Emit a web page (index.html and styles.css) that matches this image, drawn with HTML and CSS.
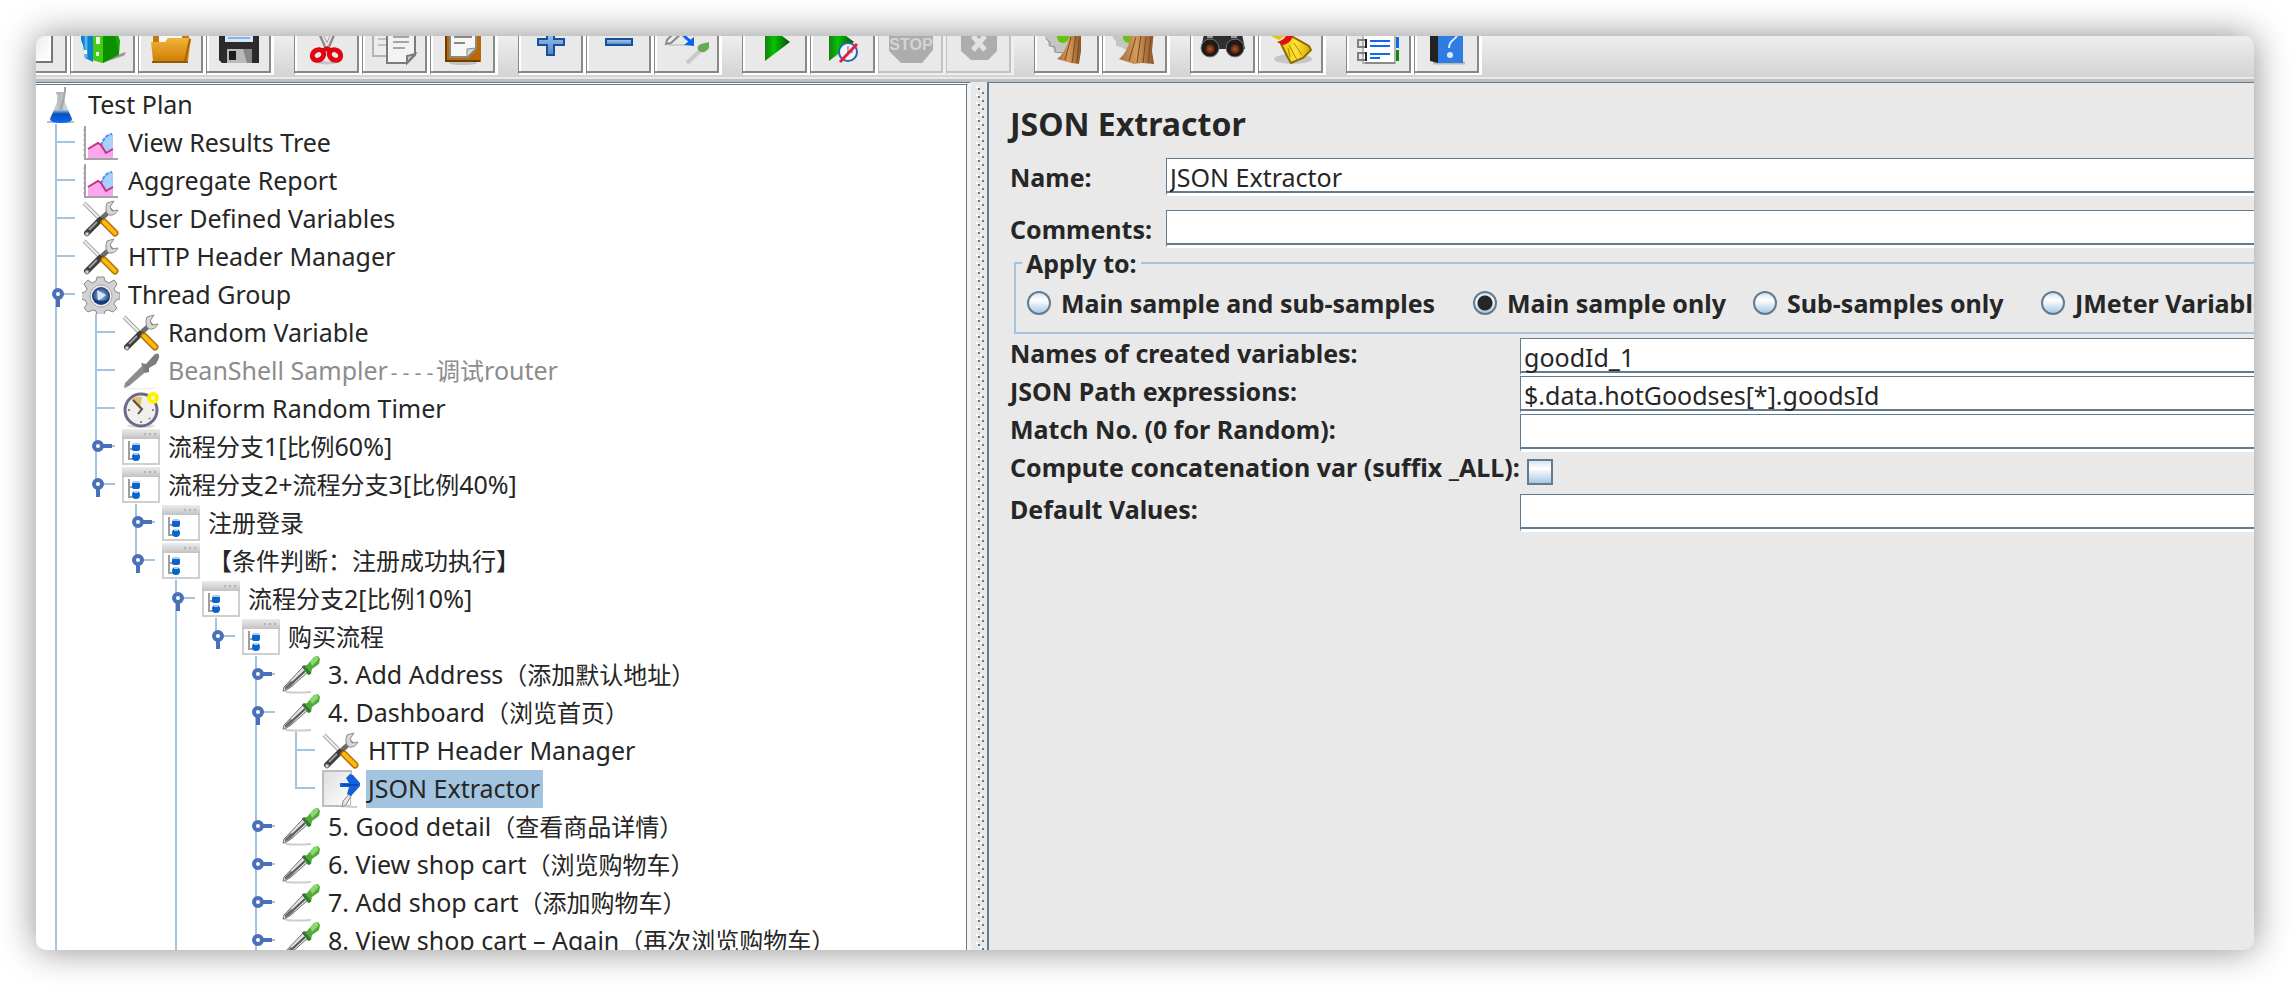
FILE: index.html
```
<!DOCTYPE html>
<html lang="zh-CN">
<head>
<meta charset="utf-8">
<title>JSON Extractor</title>
<link rel="stylesheet" href="styles.css">
</head>
<body>
<svg class="defs" width="0" height="0" aria-hidden="true">
  <defs>
    <linearGradient id="g-flask" x1="0" x2="1" y1="0" y2="0"><stop offset="0" stop-color="#eceef0"/><stop offset=".45" stop-color="#b4b8bc"/><stop offset="1" stop-color="#eef0f2"/></linearGradient>
    <linearGradient id="g-liquid" x1="0" x2="0" y1="0" y2="1"><stop offset="0" stop-color="#9cc0ea"/><stop offset=".3" stop-color="#0b4fb4"/><stop offset="1" stop-color="#0a6bff"/></linearGradient>
    <linearGradient id="g-bar" x1="0" x2="0" y1="0" y2="1"><stop offset="0" stop-color="#ececec"/><stop offset="1" stop-color="#c2c2c4"/></linearGradient>
    <linearGradient id="g-orange" x1="0" x2="0" y1="0" y2="1"><stop offset="0" stop-color="#f3b43a"/><stop offset="1" stop-color="#cc7a00"/></linearGradient>
    <linearGradient id="g-green" x1="0" x2="1" y1="0" y2="0"><stop offset="0" stop-color="#1a7a12"/><stop offset=".35" stop-color="#04c404"/><stop offset="1" stop-color="#044d08"/></linearGradient>
    <linearGradient id="g-blue" x1="0" x2="0" y1="0" y2="1"><stop offset="0" stop-color="#b4d2f0"/><stop offset="1" stop-color="#4c86c8"/></linearGradient>
    <linearGradient id="g-straw" x1="0" x2="1" y1="0" y2="0"><stop offset="0" stop-color="#a8703c"/><stop offset=".5" stop-color="#d49a5c"/><stop offset="1" stop-color="#8c5626"/></linearGradient>
    <linearGradient id="g-yellow" x1="0" x2="1" y1="0" y2="0"><stop offset="0" stop-color="#e8c400"/><stop offset=".5" stop-color="#ffe23a"/><stop offset="1" stop-color="#d8a800"/></linearGradient>
    <linearGradient id="g-paper" x1="0" x2="1" y1="0" y2="1"><stop offset="0" stop-color="#dedede"/><stop offset="1" stop-color="#ffffff"/></linearGradient>
    <radialGradient id="g-ball"><stop offset="0" stop-color="#c4d8f0"/><stop offset=".4" stop-color="#6f92c4"/><stop offset="1" stop-color="#163a78"/></radialGradient>
    <radialGradient id="g-lens"><stop offset="0" stop-color="#b45a24"/><stop offset=".6" stop-color="#6a2c10"/><stop offset="1" stop-color="#111"/></radialGradient>
    <pattern id="bumps" width="8" height="8" patternUnits="userSpaceOnUse">
      <path d="M0 0h2v2H0zM4 4h2v2H4z" fill="#fff"/>
      <path d="M2 2h2v2H2zM6 6h2v2H6z" fill="#637b8f"/>
    </pattern>

    <symbol id="i-flask" viewBox="0 0 38 38">
      <path d="M5 36h27" stroke="#b9bcc0" stroke-width="2"/>
      <path d="M15 7h8v9l7 16q0 4-4 4H12q-4 0-4-4l7-16z" fill="url(#g-flask)"/>
      <path d="M12 24h14l4 9q0 4-11 4T8 33z" fill="url(#g-liquid)"/>
      <path d="M23 1v5l-4 18" fill="none" stroke="#a2a5a9" stroke-width="2"/>
      <path d="M14 7h10" stroke="#b4b4c8" stroke-width="2"/>
    </symbol>
    <symbol id="i-chart" viewBox="0 0 38 38">
      <path d="M3 2v33h33" fill="none" stroke="#a6a3a6" stroke-width="2"/>
      <path d="M1 6h2M1 11h2M1 16h2M1 21h2M1 26h2M1 31h2" stroke="#a6a3a6"/>
      <path d="M19 22q3-11 12-12v22H22z" fill="#a9cffb"/>
      <path d="M19 22q3-11 11-12" fill="none" stroke="#4c93ee" stroke-width="2" stroke-dasharray="4 1"/>
      <path d="M6 25l10-7 9 12 6-4v8H6z" fill="#ff9cf0" opacity=".9"/>
      <path d="M6 25l10-6 3 2 5 8 7-4" fill="none" stroke="#cf2f78" stroke-width="2"/>
    </symbol>
    <symbol id="i-tools" viewBox="0 0 38 38">
      <path d="M2 3l17 17" stroke="#a6a6a6" stroke-width="4"/>
      <path d="M2 3l17 17" stroke="#f0f0f0" stroke-width="2"/>
      <path d="M20 18l10-9" stroke="#6c6c6c" stroke-width="5"/>
      <path d="M25 3q-3 8 2 12q6 1 9-5l-6 1-2-4 4-6z" fill="#d8d8d8" stroke="#8c8c8c"/>
      <path d="M18 20L5 33" stroke="#3c3c3c" stroke-width="6" stroke-linecap="round"/>
      <path d="M15 22L7 30" stroke="#9c9c9c" stroke-width="2"/>
      <circle cx="5" cy="34" r="2" fill="#d8d8d8" stroke="#777"/>
      <path d="M20 19l2 2" stroke="#222" stroke-width="4"/>
      <path d="M22 22l11 11" stroke="#b27400" stroke-width="7" stroke-linecap="round"/>
      <path d="M22 22l11 11" stroke="#fdb813" stroke-width="4" stroke-linecap="round"/>
    </symbol>
    <symbol id="i-gear" viewBox="0 0 38 38">
      <path d="M15 1h7l1 4 4 2 5-3 3 4-3 5 2 3 4 1v6l-4 1-2 4 3 4-4 4-5-2-3 1-1 4h-7l-1-4-3-1-5 2-4-4 3-4-2-4-4-1v-6l4-1 2-3-3-5 4-4 4 3 4-2z" fill="#d2d2d4" stroke="#8a8a8a"/>
      <circle cx="19" cy="20" r="11" fill="#f2f2f2" stroke="#a8a8a8"/>
      <circle cx="19" cy="20" r="9" fill="url(#g-ball)"/>
      <path d="M15 14l9 5-8 6z" fill="#dde8f6"/>
      <path d="M11 22a9 9 0 0 0 17 0q-8 6-17 0z" fill="#123c80"/>
    </symbol>
    <symbol id="i-dropper" viewBox="0 0 38 38">
      <path d="M4 36q12 1 25 0" fill="none" stroke="#cdcdcd" stroke-width="2"/>
      <path d="M21 11l5 5L9 31l-6 4H1l1-4z" fill="#e2e2e2" stroke="#707070" stroke-width="1"/>
      <path d="M23 15L8 29" stroke="#555" stroke-width="2"/>
      <path d="M9 25l-6 6v3l5-3 4-4z" fill="#6a6a6a"/>
      <path d="M20 10l5-1 7-8 4-1 2 3-1 5-7 5-1 5-3 1z" fill="#55a83c"/>
      <path d="M28 5l5-4q4-1 3 3l-6 6z" fill="#86dc6c"/>
      <path d="M21 10l7 8" stroke="#2f7a2c" stroke-width="3"/>
    </symbol>
    <symbol id="i-dropper-off" viewBox="0 0 38 38">
      <path d="M3 36q14 2 30 0" fill="none" stroke="#e6e6e6"/>
      <path d="M22 12L3 31l-1 5 5-2 20-17z" fill="#8c8c8c"/>
      <path d="M19 11l5 1 9-10q5-2 4 4l-3 6-7 4v4l-4 1z" fill="#7c7c7c"/>
    </symbol>
    <symbol id="i-timer" viewBox="0 0 38 38">
      <ellipse cx="19" cy="36" rx="14" ry="2" fill="#ddd"/>
      <circle cx="19" cy="20" r="16" fill="#f1f0ec" stroke="#6d678c" stroke-width="3"/>
      <path d="M9 9l9 11 2-13q-6-1-11 2z" fill="#e1c26c"/>
      <path d="M11 10l9 9-4 5" fill="none" stroke="#55504a" stroke-width="2"/>
      <path d="M19 31v2M30 20h2M6 20h2M27 28l1 1" stroke="#888" stroke-width="2"/>
      <circle cx="31" cy="8" r="6" fill="#fff200"/>
      <circle cx="31" cy="8" r="2" fill="#fffbb4"/>
    </symbol>
    <symbol id="i-window" viewBox="0 0 38 38">
      <rect x="1" y="2" width="36" height="34" fill="#fff" stroke="#cfcfcf" stroke-width="2"/>
      <rect x="0" y="1" width="38" height="10" fill="url(#g-bar)"/>
      <path d="M22 6h2M27 6h2M32 6h2" stroke="#b4b4b4" stroke-width="2"/>
      <path d="M7 13v18h5M7 21h5" fill="none" stroke="#9e9e9e" stroke-width="2"/>
      <rect x="10" y="16" width="8" height="7" rx="2" fill="#0d63cc"/>
      <circle cx="14" cy="29" r="4" fill="#0d63cc"/>
      <path d="M11 16h6M12 26h4" stroke="#a8cdf6" stroke-width="2"/>
    </symbol>
    <symbol id="i-extract" viewBox="0 0 38 38">
      <path d="M1 1h28v35H1z" fill="url(#g-paper)" stroke="#bdbdbd" stroke-width="2"/>
      <path d="M30 0h2v37h-3z" fill="#fff"/>
      <path d="M19 36q10 1 16 1" stroke="#cfcfcf" stroke-width="2" fill="none"/>
      <path d="M29 22l-8 9-1 6 4-2 6-11z" fill="#e4e4e4" stroke="#8c8c8c"/>
      <path d="M18 13h9l-3-5 4-4 3 1 7 8v3l-9 10-4-2 2-7h-9z" fill="#1261d8"/>
      <path d="M21 15h15" stroke="#0a48b4" stroke-width="2"/>
    </symbol>
    <symbol id="i-open" viewBox="0 0 40 38">
      <path d="M16 20v11" stroke="#4a70b8" stroke-width="4"/>
      <circle cx="16" cy="18" r="4" fill="#fff" stroke="#4a70b8" stroke-width="4"/>
    </symbol>
    <symbol id="i-closed" viewBox="0 0 40 38">
      <path d="M20 18h10" stroke="#4a70b8" stroke-width="4"/>
      <circle cx="16" cy="18" r="4" fill="#fff" stroke="#4a70b8" stroke-width="4"/>
    </symbol>
  </defs>
</svg>

<main class="window">
  <div class="toolbar" role="toolbar" aria-label="Toolbar">
    <div class="group">
      <button class="tool" aria-label="New"><svg viewBox="0 0 52 52"><path d="M4 4h39v43H4z" fill="url(#g-paper)" stroke="#777671" stroke-width="2"/><path d="M41 4v41H4" fill="none" stroke="#fff" stroke-width="2"/></svg></button>
      <button class="tool" aria-label="Templates"><svg viewBox="0 0 52 52"><path d="M26 46l22-9q2 2-2 4l-18 6z" fill="#999"/><path d="M4 10h12v37l-8-4-2-13-2-5z" fill="#0d7fd0"/><path d="M9 12v31" stroke="#56b4ee" stroke-width="3"/><path d="M16 10h22l5 16-1 14-16 8-10-3z" fill="#14a800"/><path d="M16 10h10v38l-10-3z" fill="#44cc10"/><path d="M26 22l12-2 4 19-16 9z" fill="#087c00" opacity=".55"/><path d="M19 22h4v7h-4zM7 35h3v4H7zM19 37h3v4h-3z" fill="#eef8ea"/></svg></button>
      <button class="tool" aria-label="Open"><svg viewBox="0 0 52 52"><path d="M8 12h36v18H8z" fill="#c47a08"/><path d="M14 12h23v17H14z" fill="#f6f6f6"/><path d="M6 27h14l3-4h23l-3 23q0 2-3 2H11q-3 0-3-2z" fill="url(#g-orange)"/><path d="M7 47h36" stroke="#8c5a10" stroke-width="2"/><path d="M40 46l5-22" stroke="#a86400" stroke-width="2"/></svg></button>
      <button class="tool" aria-label="Save"><svg viewBox="0 0 52 52"><path d="M6 6h40v42H9l-3-3z" fill="#2b2b2e"/><path d="M12 6h28v21H12z" fill="#d4e6f6"/><path d="M15 23h22" stroke="#8eb4d8" stroke-width="2"/><path d="M14 34h25v14H14z" fill="#b9b9b9"/><path d="M30 34h9v14h-5z" fill="#888"/><path d="M16 36h7v9h-7z" fill="#1c1c1e"/></svg></button>
    </div>
    <div class="group">
      <button class="tool" aria-label="Cut"><svg viewBox="0 0 52 52"><path d="M14 46q12 4 24 0" stroke="#c6c6c6" stroke-width="3" fill="none"/><path d="M15 8l11 25M37 8L26 33" stroke="#8d8d8d" stroke-width="5"/><path d="M16 8l11 25M36 8L25 33" stroke="#e4e4e4" stroke-width="2"/><ellipse cx="17" cy="40" rx="6" ry="5" fill="none" stroke="#e00610" stroke-width="5" transform="rotate(-35 17 40)"/><ellipse cx="34" cy="40" rx="6" ry="5" fill="none" stroke="#e00610" stroke-width="5" transform="rotate(35 34 40)"/><path d="M20 34l6-3 6 3-6 3z" fill="#e00610"/></svg></button>
      <button class="tool" aria-label="Copy"><svg viewBox="0 0 52 52"><path d="M4 4h24v37H4z" fill="#ececec" stroke="#b2b2b2" stroke-width="2"/><path d="M9 24h8M9 30h8" stroke="#c2c2c2" stroke-width="2"/><path d="M18 8h28v32l-8 8H18z" fill="#f3f3f3" stroke="#7b7b77" stroke-width="2"/><path d="M24 22h16M24 27h16M24 33h12" stroke="#a6a6a6" stroke-width="2"/><path d="M38 48v-7l8-2z" fill="#cfcfcf" stroke="#7b7b77" stroke-width="2"/></svg></button>
      <button class="tool" aria-label="Paste"><svg viewBox="0 0 52 52"><ellipse cx="26" cy="48" rx="14" ry="2" fill="#c0c0c0"/><path d="M8 6h36v41H8z" fill="#b96a06"/><path d="M9 6v40h34" fill="none" stroke="#6c3e06" stroke-width="2"/><path d="M13 6h26v28l-8 8H13z" fill="#f7f7f5" stroke="#8a8a82" stroke-width="2"/><path d="M17 22h18M17 28h11" stroke="#8a8a82" stroke-width="2"/><path d="M30 42v-8l9-1z" fill="#d6d6d2" stroke="#8a8a82"/></svg></button>
    </div>
    <div class="group">
      <button class="tool" aria-label="Expand All"><svg viewBox="0 0 52 52"><path d="M22 13h7v11h10v6H29v10h-7V30H13v-6h9z" fill="url(#g-blue)" stroke="#19509c" stroke-width="2"/></svg></button>
      <button class="tool" aria-label="Collapse All"><svg viewBox="0 0 52 52"><path d="M13 24h26v6H13z" fill="url(#g-blue)" stroke="#19509c" stroke-width="2"/></svg></button>
      <button class="tool" aria-label="Toggle"><svg viewBox="0 0 52 52"><path d="M6 25l14-14 4 4-14 13-5 1z" fill="#ececec" stroke="#8a8a8a" stroke-width="2"/><path d="M8 30h16" stroke="#b4b4b4"/><path d="M19 15q4 7 10 11" fill="none" stroke="#0b62f0" stroke-width="3"/><path d="M33 22v9l-10-1z" fill="#0b62f0"/><path d="M40 35L26 48" stroke="#c8caca" stroke-width="4"/><path d="M38 36q-4-4 2-7l8-2v6q-3 5-8 4z" fill="#6aa85a"/></svg></button>
    </div>
    <div class="group">
      <button class="tool" aria-label="Start"><svg viewBox="0 0 52 52"><path d="M16 8l25 19-25 19z" fill="url(#g-green)"/></svg></button>
      <button class="tool" aria-label="Start no pauses"><svg viewBox="0 0 52 52"><path d="M12 8l25 19-25 19z" fill="url(#g-green)"/><circle cx="31" cy="37" r="9" fill="#f2f4f6" stroke="#2a64ac" stroke-width="2"/><path d="M31 31v6h5" fill="none" stroke="#aaa" stroke-width="2"/><path d="M23 47l17-18" stroke="#e2203c" stroke-width="3"/></svg></button>
      <button class="tool" aria-label="Stop" disabled><svg viewBox="0 0 52 52"><path d="M16 4h20l12 12v19L37 48H16L4 36V16z" fill="#adadad"/><text class="stop-text" x="26" y="35">STOP</text></svg></button>
      <button class="tool" aria-label="Shutdown" disabled><svg viewBox="0 0 52 52"><path d="M17 9h18l9 9v18l-9 9H18l-10-9V18z" fill="#adadad"/><path d="M20 21l12 14M32 21L20 35" stroke="#e2e2e2" stroke-width="5"/></svg></button>
    </div>
    <div class="group">
      <button class="tool" aria-label="Clear"><svg viewBox="0 0 52 52"><path d="M4 14h26v18l-6 6-11-1-1-5-5-1v-5l-3-3z" fill="#c4c6c6"/><path d="M5 24l4 3v4l5 1v5l8 1" fill="none" stroke="#8a8c8c" stroke-width="1"/><circle cx="22" cy="22" r="6" fill="#66c40c"/><path d="M28 14h12v22l-2 13-8-1-14-4q8-6 12-20z" fill="url(#g-straw)"/><path d="M30 22l-6 23M35 20l-4 28M38 24l-2 24" stroke="#7c4a20" stroke-width="1"/></svg></button>
      <button class="tool" aria-label="Clear All"><svg viewBox="0 0 52 52"><path d="M4 14h24v18l-6 6-10-6-5-1v-5l-3-3z" fill="#c4c6c6"/><circle cx="20" cy="22" r="6" fill="#66c40c"/><path d="M23 14h22l-2 22 2 13-12-1-8 1-15-5q8-6 11-20z" fill="url(#g-straw)"/><path d="M27 22l-7 24M32 20l-4 28M37 22l-3 26M42 22l-3 26" stroke="#7c4a20" stroke-width="1"/></svg></button>
    </div>
    <div class="group">
      <button class="tool" aria-label="Search"><svg viewBox="0 0 52 52"><path d="M8 14h12l4 6h4l4-6h12l4 20H4z" fill="#2e2e2e"/><circle cx="13" cy="33" r="9" fill="#1c1c1c" stroke="#777"/><circle cx="38" cy="33" r="9" fill="#1c1c1c" stroke="#777"/><circle cx="13" cy="34" r="6" fill="url(#g-lens)"/><circle cx="38" cy="34" r="6" fill="url(#g-lens)"/><path d="M10 22h6M34 22h6" stroke="#9a9a9a" stroke-width="2"/></svg></button>
      <button class="tool" aria-label="Reset Search"><svg viewBox="0 0 52 52"><ellipse cx="28" cy="44" rx="19" ry="5" fill="#c6c6c6"/><path d="M26 21l18 10 2 4-8 8-12 5-4-7-6-12z" fill="url(#g-yellow)" stroke="#8c6c00" stroke-width="2"/><path d="M24 30l8 15M29 28l8 12M23 33l2 9" stroke="#a88400"/><path d="M6 21l8 4 12-8-8-6z" fill="#e8c400"/><path d="M12 27q9-2 11-11l5 5q-3 8-10 9z" fill="#e01010"/></svg></button>
    </div>
    <div class="group">
      <button class="tool" aria-label="Function Helper"><svg viewBox="0 0 52 52"><path d="M42 22h4v11h-4z" fill="#1468f0"/><path d="M42 35h4v11h-4z" fill="#0c8c10"/><path d="M10 8h32v40H10z" fill="#fff" stroke="#b4b4b4" stroke-width="2"/><path d="M12 48h30" stroke="#8a8a8a" stroke-width="2"/><path d="M17 26h20M17 31h20M17 39h20M17 43h10" stroke="#1468f0" stroke-width="2"/><path d="M13 25H5v7h8M13 38H5v7h8" fill="none" stroke="#808080" stroke-width="2"/><path d="M13 24v9M13 37v9" stroke="#222" stroke-width="2"/></svg></button>
      <button class="tool" aria-label="Help"><svg viewBox="0 0 52 52"><path d="M12 48h32" stroke="#b8b8b8" stroke-width="3"/><path d="M16 6h26v42H16z" fill="#2f7ce4"/><path d="M9 6h8v42l-8-2z" fill="#222"/><path d="M25 21q2-7 9-5 5 4-2 9-4 3-4 8" fill="none" stroke="#dceaff" stroke-width="2"/><circle cx="29" cy="40" r="3" fill="#dceaff"/></svg></button>
    </div>
  </div>

  <div class="split">
    <nav class="tree" aria-label="Test plan">
      <div class="row"><svg class="icon"><use href="#i-flask"/></svg><span class="label">Test Plan</span></div>
      <ul class="branch">
        <li><div class="row"><span class="slot"></span><svg class="icon"><use href="#i-chart"/></svg><span class="label">View Results Tree</span></div></li>
        <li><div class="row"><span class="slot"></span><svg class="icon"><use href="#i-chart"/></svg><span class="label">Aggregate Report</span></div></li>
        <li><div class="row"><span class="slot"></span><svg class="icon"><use href="#i-tools"/></svg><span class="label">User Defined Variables</span></div></li>
        <li><div class="row"><span class="slot"></span><svg class="icon"><use href="#i-tools"/></svg><span class="label">HTTP Header Manager</span></div></li>
        <li class="continues"><div class="row"><button class="slot" aria-label="Collapse"><svg><use href="#i-open"/></svg></button><svg class="icon"><use href="#i-gear"/></svg><span class="label">Thread Group</span></div>
          <ul class="branch">
            <li><div class="row"><span class="slot"></span><svg class="icon"><use href="#i-tools"/></svg><span class="label">Random Variable</span></div></li>
            <li><div class="row"><span class="slot"></span><svg class="icon"><use href="#i-dropper-off"/></svg><span class="label off">BeanShell Sampler<span class="dashes">----</span><span class="cjk">调试</span>router</span></div></li>
            <li><div class="row"><span class="slot"></span><svg class="icon"><use href="#i-timer"/></svg><span class="label">Uniform Random Timer</span></div></li>
            <li><div class="row"><button class="slot" aria-label="Expand"><svg><use href="#i-closed"/></svg></button><svg class="icon"><use href="#i-window"/></svg><span class="label"><span class="cjk">流程分支</span>1[<span class="cjk">比例</span>60%]</span></div></li>
            <li><div class="row"><button class="slot" aria-label="Collapse"><svg><use href="#i-open"/></svg></button><svg class="icon"><use href="#i-window"/></svg><span class="label"><span class="cjk">流程分支</span>2+<span class="cjk">流程分支</span>3[<span class="cjk">比例</span>40%]</span></div>
              <ul class="branch">
                <li><div class="row"><button class="slot" aria-label="Expand"><svg><use href="#i-closed"/></svg></button><svg class="icon"><use href="#i-window"/></svg><span class="label"><span class="cjk">注册登录</span></span></div></li>
                <li><div class="row"><button class="slot" aria-label="Collapse"><svg><use href="#i-open"/></svg></button><svg class="icon"><use href="#i-window"/></svg><span class="label"><span class="cjk">【条件判断：注册成功执行】</span></span></div>
                  <ul class="branch">
                    <li class="continues"><div class="row"><button class="slot" aria-label="Collapse"><svg><use href="#i-open"/></svg></button><svg class="icon"><use href="#i-window"/></svg><span class="label"><span class="cjk">流程分支</span>2[<span class="cjk">比例</span>10%]</span></div>
                      <ul class="branch">
                        <li><div class="row"><button class="slot" aria-label="Collapse"><svg><use href="#i-open"/></svg></button><svg class="icon"><use href="#i-window"/></svg><span class="label"><span class="cjk">购买流程</span></span></div>
                          <ul class="branch">
                            <li><div class="row"><button class="slot" aria-label="Expand"><svg><use href="#i-closed"/></svg></button><svg class="icon"><use href="#i-dropper"/></svg><span class="label">3. Add Address<span class="cjk">（添加默认地址）</span></span></div></li>
                            <li><div class="row"><button class="slot" aria-label="Collapse"><svg><use href="#i-open"/></svg></button><svg class="icon"><use href="#i-dropper"/></svg><span class="label">4. Dashboard<span class="cjk">（浏览首页）</span></span></div>
                              <ul class="branch">
                                <li><div class="row"><span class="slot"></span><svg class="icon"><use href="#i-tools"/></svg><span class="label">HTTP Header Manager</span></div></li>
                                <li><div class="row"><span class="slot"></span><svg class="icon"><use href="#i-extract"/></svg><span class="label selected">JSON Extractor</span></div></li>
                              </ul>
                            </li>
                            <li><div class="row"><button class="slot" aria-label="Expand"><svg><use href="#i-closed"/></svg></button><svg class="icon"><use href="#i-dropper"/></svg><span class="label">5. Good detail<span class="cjk">（查看商品详情）</span></span></div></li>
                            <li><div class="row"><button class="slot" aria-label="Expand"><svg><use href="#i-closed"/></svg></button><svg class="icon"><use href="#i-dropper"/></svg><span class="label">6. View shop cart<span class="cjk">（浏览购物车）</span></span></div></li>
                            <li><div class="row"><button class="slot" aria-label="Expand"><svg><use href="#i-closed"/></svg></button><svg class="icon"><use href="#i-dropper"/></svg><span class="label">7. Add shop cart<span class="cjk">（添加购物车）</span></span></div></li>
                            <li class="continues"><div class="row"><button class="slot" aria-label="Expand"><svg><use href="#i-closed"/></svg></button><svg class="icon"><use href="#i-dropper"/></svg><span class="label">8. View shop cart – Again<span class="cjk">（再次浏览购物车）</span></span></div></li>
                          </ul>
                        </li>
                      </ul>
                    </li>
                  </ul>
                </li>
              </ul>
            </li>
          </ul>
        </li>
      </ul>
    </nav>

    <div class="divider" role="separator"><svg aria-hidden="true"><rect width="8" height="100%" fill="url(#bumps)"/></svg></div>

    <form class="editor">
      <h1>JSON Extractor</h1>
      <div class="naming">
        <label for="name">Name:</label><input class="field" type="text" id="name" value="JSON Extractor">
        <label for="comments">Comments:</label><input class="field" type="text" id="comments">
      </div>
      <fieldset>
        <legend>Apply to:</legend>
        <div class="scopes">
          <label><input type="radio" name="scope">Main sample and sub-samples</label>
          <label><input type="radio" name="scope" checked>Main sample only</label>
          <label><input type="radio" name="scope">Sub-samples only</label>
          <label><input type="radio" name="scope">JMeter Variable</label>
        </div>
      </fieldset>
      <div class="settings">
        <label for="vars">Names of created variables:</label><input class="field" type="text" id="vars" value="goodId_1">
        <label for="paths">JSON Path expressions:</label><input class="field" type="text" id="paths" value="$.data.hotGoodses[*].goodsId">
        <label for="match">Match No. (0 for Random):</label><input class="field" type="text" id="match">
        <label for="concat">Compute concatenation var (suffix _ALL):</label><input type="checkbox" id="concat">
        <label for="defaults">Default Values:</label><input class="field" type="text" id="defaults">
      </div>
    </form>
  </div>
</main>
</body>
</html>
```

FILE: styles.css
```
:root {
  --steel: #637b8f;
  --sky: #a3c4e0;
  --panel: #e9e9e9;
  --ink: #262626;
}

* { box-sizing: border-box; }

body {
  margin: 0;
  height: 100vh;
  padding: 36px;
  background: #fff;
  color: var(--ink);
  font: 25px/38px "Noto Sans", "Noto Sans CJK SC", sans-serif;
  overflow: hidden;
}

button, input { font: inherit; color: inherit; margin: 0; }

.defs { position: absolute; }

.window {
  height: 100%;
  display: flex;
  flex-direction: column;
  background: var(--panel);
  border-radius: 10px;
  overflow: hidden;
  box-shadow: 0 0 36px rgba(0, 0, 0, .46);
}

/* Toolbar */
.toolbar {
  flex: none;
  height: 46px;
  margin-left: -34px;
  padding-bottom: 4px;
  display: flex;
  align-items: flex-end;
  gap: 20px;
  overflow: hidden;
  background: linear-gradient(#eeeeee, #d2d2d2);
  border-bottom: 3px solid #bfbfbf;
  box-shadow: inset 0 -2px #e9e9e9;
}

.group { display: flex; }

.tool {
  flex: none;
  width: 68px;
  height: 68px;
  padding: 6px 5px 6px 6px;
  background: var(--panel);
  border: 1px solid #888;
  border-width: 2px 3px 2px 1px;
  border-color: #888 #fff #fff #888;
  box-shadow: inset -2px -2px #888, inset 2px 0 #fff;
}

.tool svg { display: block; width: 52px; height: 52px; }

.tool:disabled {
  border-color: #c2c2c2 #efefef #efefef #c2c2c2;
  box-shadow: inset -2px -2px #c2c2c2;
}

.stop-text {
  font: bold 16px "Liberation Sans", sans-serif;
  text-anchor: middle;
  fill: #d4d4d4;
}

/* Split pane */
.split {
  flex: 1;
  min-height: 0;
  display: grid;
  grid-template-columns: minmax(0, 935fr) 16px minmax(0, 1267fr);
}

.tree {
  padding: 1px 0 0 6px;
  background: #fff;
  border-top: 3px double var(--steel);
  border-right: 4px solid #f4f4f4;
  box-shadow: inset -1px 0 var(--steel);
  overflow: hidden;
  white-space: nowrap;
}

.branch { list-style: none; margin: 0; padding: 0; }
.branch .branch { margin-left: 40px; }

.branch li {
  background:
    linear-gradient(var(--sky), var(--sky)) 13px 0 / 2px 100% no-repeat,
    linear-gradient(var(--sky), var(--sky)) 13px 17px / 20px 2px no-repeat;
}

.branch li:last-child:not(.continues) { background-size: 2px 19px, 20px 2px; }

.row { display: flex; height: 38px; line-height: 37px; }

.slot {
  flex: none;
  width: 40px;
  height: 38px;
  padding: 0;
  border: 0;
  background: none;
}

.slot svg { display: block; width: 40px; height: 38px; }

.icon { flex: none; width: 38px; height: 38px; margin-right: 6px; }

.label { padding: 0 3px 0 2px; }
.off { color: #8c8c8c; }
.selected { background: var(--sky); }
.cjk { font-size: 24px; }
.dashes { font: 20px "DejaVu Sans Mono", monospace; }

.divider { padding: 4px 4px 0 5px; overflow: hidden; }
.divider svg { display: block; width: 8px; height: 100%; }

/* Editor */
.editor {
  padding: 17px 0 0 21px;
  border-top: 1px solid var(--steel);
  border-left: 2px solid var(--steel);
  overflow: hidden;
  white-space: nowrap;
  font-weight: bold;
}

h1 { margin: 0 0 10px; font-size: 32px; line-height: 48px; }

.naming {
  display: grid;
  grid-template-columns: 156px minmax(0, 1fr);
  row-gap: 14px;
}

.field {
  width: 100%;
  height: 38px;
  padding: 2px 3px 0;
  font-weight: normal;
  background: #fff;
  border: solid;
  border-width: 1px 0 3px 1px;
  border-color: var(--steel) #fff #fff var(--steel);
  border-radius: 0;
  box-shadow: inset 0 -2px var(--steel);
  outline: 0;
}

fieldset {
  min-width: 0;
  margin: 1px 0 4px 4px;
  padding: 7px 0 10px 11px;
  border: 2px solid var(--sky);
  border-right: 0;
}

legend {
  margin-left: -5px;
  padding: 0 4px;
  line-height: 28px;
}

.scopes {
  display: grid;
  grid-template-columns: 446px 280px 288px minmax(0, 1fr);
}

.scopes label { display: flex; align-items: center; gap: 10px; }

input[type="radio"],
input[type="checkbox"] {
  appearance: none;
  flex: none;
  width: 24px;
  height: 24px;
  border: 2px solid var(--steel);
  background: linear-gradient(#d6e4f2, #fff 35%, #a8c8e4);
}

input[type="radio"] { border-radius: 50%; }

input[type="radio"]:checked {
  background:
    radial-gradient(circle, var(--ink) 7px, transparent 8px),
    linear-gradient(#d6e4f2, #fff 35%, #a8c8e4);
}

input[type="checkbox"] { width: 26px; height: 26px; margin: 7px 0 9px 7px; }

.settings {
  display: grid;
  grid-template-columns: 510px minmax(0, 1fr);
}

.settings label { line-height: 30px; }
```
